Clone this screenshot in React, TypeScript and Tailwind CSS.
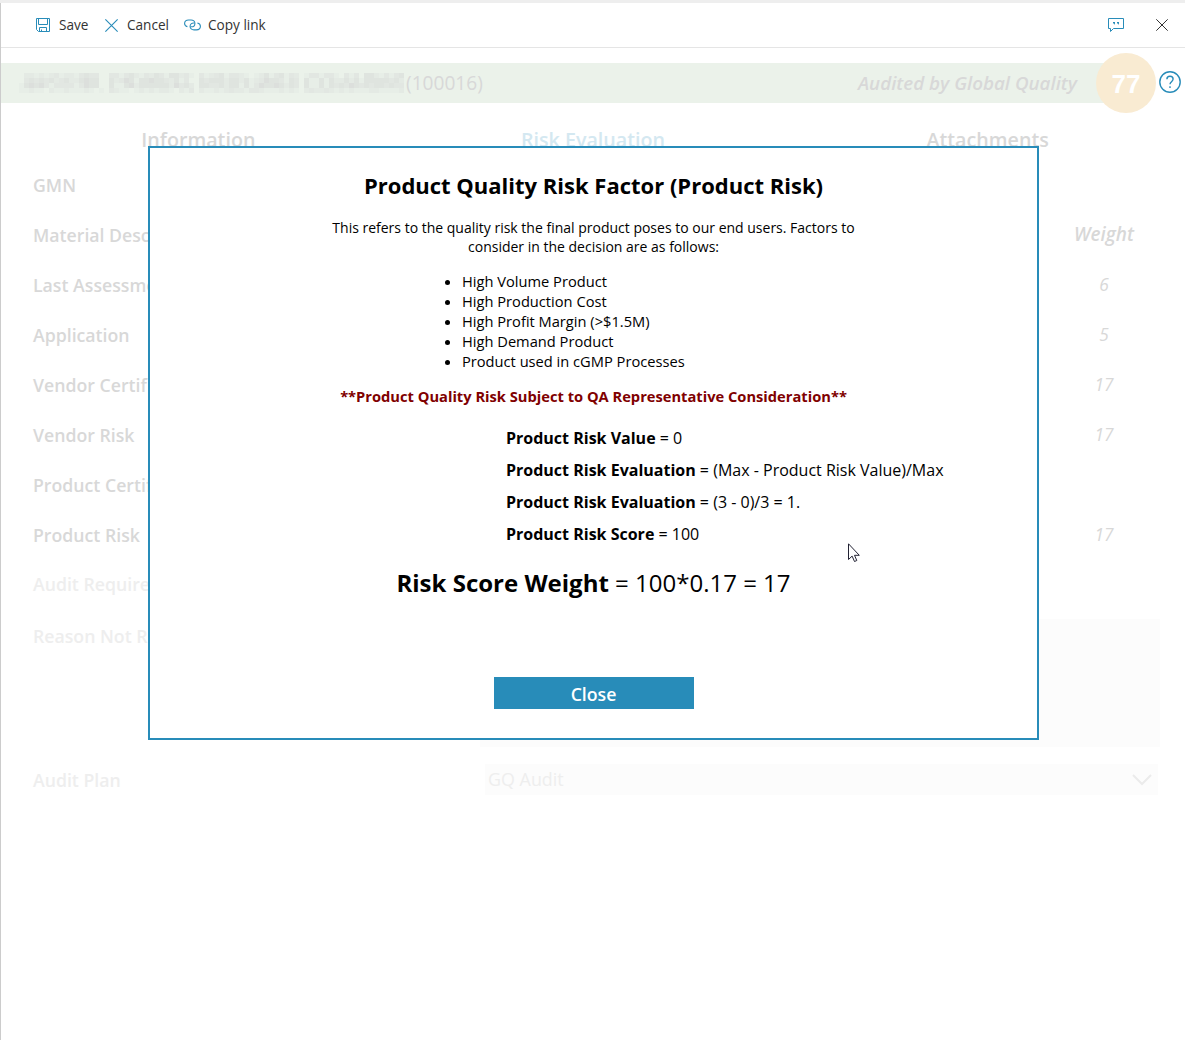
import type { ReactNode } from "react";

const BLUE = "#288cb9";

// Shade levels of the redacted company name, one digit per 5px cell, one string per word.
const MOSAIC = [
  ["02212123122134330", "33134213243144231", "31234133210124134132", "13313310313044213134"],
  ["03434342342245440", "42354144544324130", "43444244241235443143", "41141422424144444342"],
  ["14545313333135440", "41145244444425342", "44334244141354454243", "41141434354343443433"],
  ["11211021121112101", "32110121212210213", "21121232213321112121", "23223212121112211112"],
];
const SHADES = ["transparent", "#e7eee7", "#e4eae4", "#e2e7e2", "#dfe4df", "#dcdfdc"];

function Redacted() {
  return (
    <svg width="385" height="20" shapeRendering="crispEdges" className="shrink-0">
      {MOSAIC.map((words, y) =>
        words.join("0").split("").map((c, x) => (
          <rect key={`${x}-${y}`} x={x * 5} y={y * 5} width="5" height="5" fill={SHADES[Number(c)]} />
        ))
      )}
    </svg>
  );
}

function SaveIcon() {
  return (
    <svg width="14" height="14" viewBox="0 0 14 14" fill="none" stroke={BLUE}>
      <path d="M.5.5h13v13h-11l-2-2zM2.5.5v6h9v-6M3.5 13.5v-4h7v4M5.5 13.5v-2" />
    </svg>
  );
}

function CrossIcon({ color, size }: { color: string; size: number }) {
  return (
    <svg width={size} height={size} viewBox="0 0 12 12" stroke={color} strokeWidth="1">
      <path d="M.3.3l11.4 11.4M11.7.3L.3 11.7" />
    </svg>
  );
}

function LinkIcon() {
  return (
    <svg width="17" height="12" viewBox="0 0 17 12" fill="none" stroke={BLUE} strokeWidth="1.1">
      <path d="M3.4 7.6C1.6 7.2.6 6 .6 4.5C.6 2.400 2.200 1 4.500 1H7c2.300 0 3.900 1.400 3.900 3.400S9.300 7.800 7.300 7.800H6.500" />
      <path d="M13.400 4c1.900.4 3 1.600 3 3.300 0 2.100-1.600 3.600-3.900 3.600H10c-2.300 0-3.900-1.500-3.900-3.500S7.700 4 9.700 4h.8" />
    </svg>
  );
}

function CommentIcon() {
  return (
    <svg width="16" height="15" viewBox="0 0 16 15" fill="none" stroke={BLUE}>
      <path d="M.5.5h15v10h-10l-3 3v-3h-2z" />
      <path d="M5 4h2v1.500L6 7V5.500H5zM9 4h2v1.500L10 7V5.500H9z" fill={BLUE} stroke="none" />
    </svg>
  );
}

function HelpIcon() {
  return (
    <svg width="22" height="22" viewBox="0 0 22 22" fill="none" stroke={BLUE} strokeWidth="1.4">
      <circle cx="11" cy="11" r="10.200" />
      <path d="M7.900 8.300C7.900 6.500 9.200 5.300 11 5.300s3.100 1.100 3.100 2.800c0 2.500-3.100 2.700-3.100 5.200" />
      <path d="M11 15.300v1.700" />
    </svg>
  );
}

function Row({ label, weight, bold }: { label: string; weight?: string; bold?: boolean }) {
  return (
    <div className="flex h-[50px] items-center justify-between pr-[45px] pl-8">
      <span className="text-[17.7px] font-semibold">{label}</span>
      {weight && (
        <span
          className={
            bold
              ? "-mt-0.5 w-[72px] text-center text-[18.9px] font-semibold italic"
              : "w-[72px] text-center text-[17.300px] italic"
          }
        >
          {weight}
        </span>
      )}
    </div>
  );
}

function Formula({ name, children }: { name: string; children: ReactNode }) {
  return (
    <p className="whitespace-nowrap">
      <b>{name}</b> {children}
    </p>
  );
}

function Dialog() {
  return (
    <div className="absolute top-[146px] left-[148px] flex h-[594px] w-[891px] flex-col items-center border-2 border-[#288cb9] bg-white pt-[22px] text-black">
      <h2 className="text-[22px] leading-[30px] font-bold">Product Quality Risk Factor (Product Risk)</h2>
      <p className="mt-[18px] w-[560px] text-center text-[14px] leading-[19px]">
        This refers to the quality risk the final product poses to our end users. Factors to
        <br />
        consider in the decision are as follows:
      </p>
      <ul className="mt-[15px] ml-[312px] list-disc self-start text-[14.660px] leading-5">
        <li>High Volume Product</li>
        <li>High Production Cost</li>
        <li>High Profit Margin (&gt;$1.5M)</li>
        <li>High Demand Product</li>
        <li>Product used in cGMP Processes</li>
      </ul>
      <p className="mt-[15px] text-[14.680px] leading-5 font-bold text-[#800000]">
        **Product Quality Risk Subject to QA Representative Consideration**
      </p>
      <div className="mt-4 ml-[356px] self-start text-[16px] leading-8">
        <Formula name="Product Risk Value">= 0</Formula>
        <Formula name="Product Risk Evaluation">= (Max - Product Risk Value)/Max</Formula>
        <Formula name="Product Risk Evaluation">= (3 - 0)/3 = 1.</Formula>
        <Formula name="Product Risk Score">= 100</Formula>
      </div>
      <p className="mt-4 text-[24px] leading-[33px]">
        <b>Risk Score Weight</b> = 100*0.17 = 17
      </p>
      <button className="mt-[78px] h-8 w-[200px] bg-[#288cb9] pt-0.5 text-[17.700px] leading-[30px] font-semibold text-white">
        Close
      </button>
    </div>
  );
}

export default function App() {
  return (
    <div className="relative flex h-[1040px] w-[1185px] flex-col overflow-hidden bg-white font-['Open_Sans','Noto_Sans',sans-serif] text-[#d8d8d8]">
      <div className="h-[3px] shrink-0 bg-[#eeeeee]" />
      <div className="flex flex-1 flex-col border-l border-[#cccccc]">
        <header className="flex h-[45px] shrink-0 items-center border-b border-[#e5e5e5] pr-[17px] pl-[35px] text-[13.600px] text-[#333333]">
          <SaveIcon />
          <span className="ml-[9px] w-[46px]">Save</span>
          <CrossIcon color={BLUE} size={13} />
          <span className="ml-[9px] w-[57px]">Cancel</span>
          <LinkIcon />
          <span className="ml-[7px]">Copy link</span>
          <span className="ml-auto">
            <CommentIcon />
          </span>
          <span className="ml-8">
            <CrossIcon color="#333333" size={12} />
          </span>
        </header>

        <div className="flex h-[70px] shrink-0 items-center">
          <div className="flex h-10 w-[1125px] shrink-0 items-center bg-[#ebf2ea] pl-[18px]">
            <Redacted />
            <span className="ml-[2px] pt-px text-[19.100px]">(100016)</span>
            <span className="mr-[49px] ml-auto text-[18.800px] font-semibold italic">Audited by Global Quality</span>
          </div>
          <div className="-ml-[30px] flex size-[60px] shrink-0 items-center justify-center rounded-full bg-[#f9ebd2] pt-[3px] font-['Liberation_Sans'] text-[26px] font-bold text-white">
            77
          </div>
          <span className="mb-0.5 ml-[3px]">
            <HelpIcon />
          </span>
        </div>

        <nav className="flex h-[42px] shrink-0 items-center pt-px text-[19.700px] font-semibold">
          <span className="w-[395px] text-center">Information</span>
          <span className="w-[395px] text-center text-[#d4e8f1]">Risk Evaluation</span>
          <span className="w-[395px] text-center">Attachments</span>
        </nav>

        <Row label="GMN" />
        <Row label="Material Desc" weight="Weight" bold />
        <Row label="Last Assessme" weight="6" />
        <Row label="Application" weight="5" />
        <Row label="Vendor Certif" weight="17" />
        <Row label="Vendor Risk" weight="17" />
        <Row label="Product Certif" />
        <Row label="Product Risk" weight="17" />

        <div className="text-[#eeeeee]">
          <div className="flex h-[48px] items-center pl-8 text-[17.700px] font-semibold">Audit Require</div>
          <div className="mt-[11px] flex h-[128px] justify-between pr-[25px] pl-8">
            <span className="pt-1 text-[17.700px] font-semibold">Reason Not R</span>
            <div className="w-[680px] bg-[#fcfcfc]" />
          </div>
          <div className="mt-[17px] flex h-[31px] items-center justify-between pr-[27px] pl-8">
            <span className="pt-0.5 text-[17.700px] font-semibold">Audit Plan</span>
            <div className="flex h-[31px] w-[673px] items-center justify-between bg-[#fcfcfc] pr-[6px] pl-[3px] text-[17.900px]">
              GQ Audit
              <svg width="20" height="12" viewBox="0 0 20 12" fill="none" stroke="#ebebeb" strokeWidth="2">
                <path d="M1 1l9 9 9-9" />
              </svg>
            </div>
          </div>
        </div>
      </div>

      <Dialog />

      <svg
        className="absolute top-[543px] left-[848px]"
        width="12"
        height="20"
        viewBox="0 0 12 20"
        fill="white"
        stroke="#222233"
        strokeWidth="1"
      >
        <path d="M.5.8v15.700l3.600-3.400 2.400 5.400 2.300-1-2.300-5.200h4.800z" />
      </svg>
    </div>
  );
}
